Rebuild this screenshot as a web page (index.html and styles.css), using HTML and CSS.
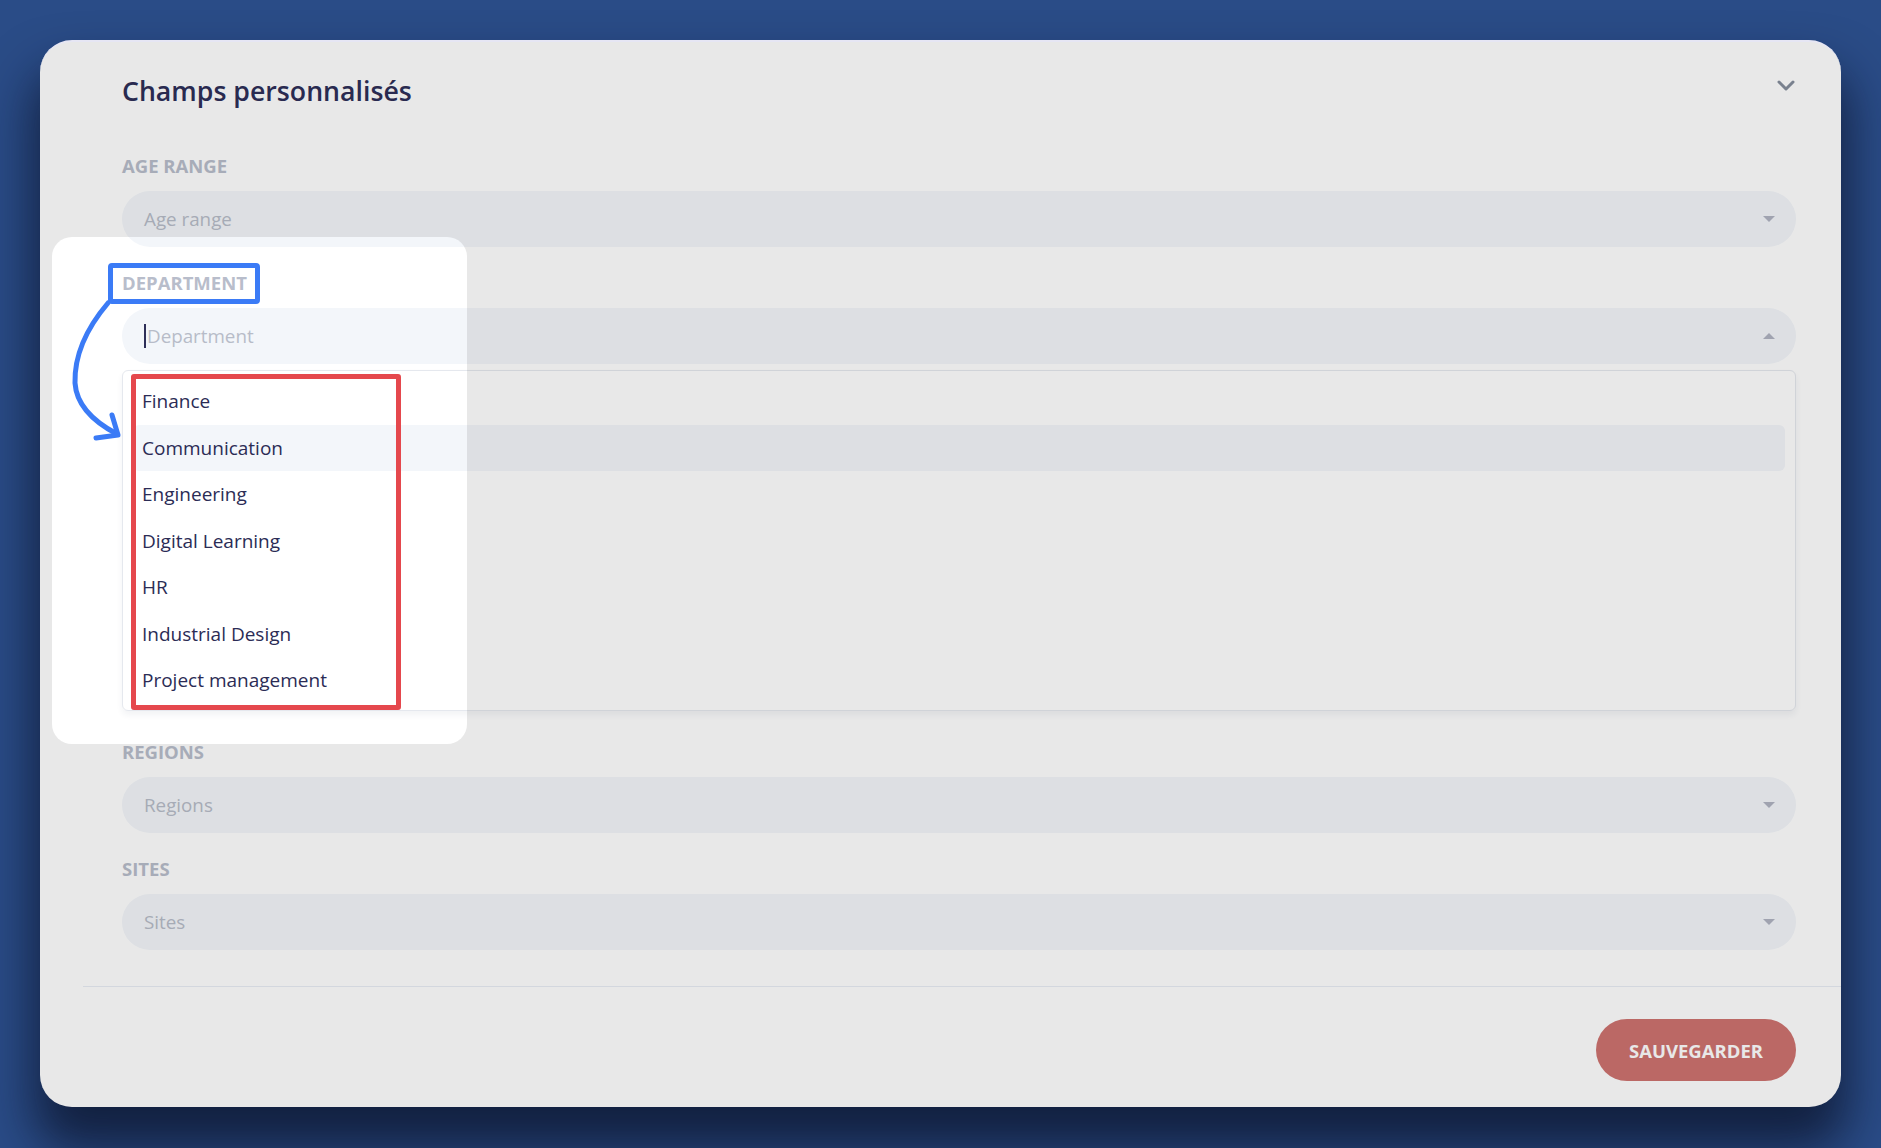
FILE: index.html
```html
<!DOCTYPE html>
<html lang="fr">
  <head>
    <meta charset="UTF-8" />
    <meta name="viewport" content="width=device-width, initial-scale=1.0" />
    <title>Champs personnalisés</title>
    <link rel="stylesheet" href="styles.css">
  </head>
  <body>
    <div class="card">
      <div class="card-head">
        <h2 class="card-title">Champs personnalisés</h2>
        <svg class="collapse-icon" width="18" height="11" viewBox="0 0 18 11">
          <polyline points="2,2 9,9 16,2" />
        </svg>
      </div>

      <div class="card-body">
        <div class="field">
          <label class="field-label">Age range</label>
          <div class="select">
            <span class="placeholder">Age range</span>
            <span class="caret"></span>
          </div>
        </div>

        <div class="field">
          <label class="field-label">Department</label>
          <div class="select">
            <span class="cursor"></span>
            <span class="placeholder">Department</span>
            <span class="caret caret-up"></span>
          </div>
          <ul class="options">
            <li>Finance</li>
            <li class="active">Communication</li>
            <li>Engineering</li>
            <li>Digital Learning</li>
            <li>HR</li>
            <li>Industrial Design</li>
            <li>Project management</li>
          </ul>
        </div>

        <div class="field">
          <label class="field-label">Regions</label>
          <div class="select">
            <span class="placeholder">Regions</span>
            <span class="caret"></span>
          </div>
        </div>

        <div class="field">
          <label class="field-label">Sites</label>
          <div class="select">
            <span class="placeholder">Sites</span>
            <span class="caret"></span>
          </div>
        </div>
      </div>

      <div class="card-foot">
        <button class="btn-save">Sauvegarder</button>
      </div>

      <!-- highlight layer -->
      <div class="spotlight"></div>
      <div class="mark mark-label"></div>
      <div class="mark mark-list"></div>
      <svg class="mark-arrow" width="110" height="190" viewBox="0 0 110 190">
        <path d="M48 8 Q14 48 15 88 Q17 118 57 139" />
        <path d="M36 143 L58 140 L52 120" />
      </svg>
    </div>
  </body>
</html>
```

FILE: styles.css
```css
* {
  box-sizing: border-box;
}
body {
  margin: 0;
  padding: 40px;
  min-height: 100vh;
  background: #2a4c87;
  font-family: "Open Sans", "Noto Sans", sans-serif;
}
.card {
  position: relative;
  overflow: hidden;
  background: #fff;
  border-top: 2px solid #e6e6f4;
  border-radius: 32px;
  box-shadow: 0 36px 50px 6px rgba(8, 14, 34, 0.7);
}
.card-head {
  display: flex;
  justify-content: space-between;
  align-items: flex-start;
  padding: 31px 46px 0 82px;
}
.card-title {
  margin: 0;
  font-size: 26.7px;
  line-height: 36px;
  font-weight: 600;
  color: #2e2f58;
}
.collapse-icon {
  margin-top: 7px;
}
.collapse-icon polyline {
  fill: none;
  stroke: #858e9d;
  stroke-width: 3;
  stroke-linecap: round;
  stroke-linejoin: round;
}
.card-body {
  display: flex;
  flex-direction: column;
  gap: 24px;
  padding: 45px 45px 36px 82px;
}
.field {
  display: flex;
  flex-direction: column;
}
.field-label {
  font-size: 18.5px;
  line-height: 24px;
  font-weight: 700;
  text-transform: uppercase;
  color: #b8bdcb;
  margin-bottom: 13px;
}
.select {
  display: flex;
  align-items: center;
  height: 56px;
  padding: 0 21px 0 22px;
  border-radius: 28px;
  background: #f3f6fa;
}
.placeholder {
  flex: 1;
  font-size: 18.8px;
  color: #b7bcc8;
}
.cursor {
  width: 2px;
  height: 24px;
  margin: 0 1px 0 0;
  background: #2e2f58;
}
.caret {
  width: 0;
  height: 0;
  border-left: 6px solid transparent;
  border-right: 6px solid transparent;
  border-top: 6px solid #b0b4c2;
}
.caret-up {
  border-top: 0;
  border-bottom: 6px solid #b0b4c2;
}
.options {
  list-style: none;
  margin: 6px 0 5.5px;
  padding: 7px 10px 6px;
  border: 1px solid #e5e8ee;
  border-radius: 6px;
  box-shadow: 0 4px 6px rgba(40, 50, 90, 0.06);
}
.options li {
  height: 46.5px;
  line-height: 46.5px;
  padding-left: 9px;
  border-radius: 6px;
  font-size: 19px;
  color: #2b2c55;
}
.options li.active {
  background: #f3f6fa;
}
.card-foot {
  display: flex;
  justify-content: flex-end;
  margin-left: 43px;
  padding: 32px 45px 26px 0;
  border-top: 1px solid #e8edf4;
}
.btn-save {
  height: 62px;
  padding: 0 33px;
  border: none;
  border-radius: 31px;
  background: #ce7370;
  color: #fff;
  font-family: inherit;
  font-size: 18.5px;
  font-weight: 700;
  text-transform: uppercase;
}
.spotlight {
  position: absolute;
  left: 12px;
  top: 195px;
  width: 415px;
  height: 507px;
  border-radius: 20px;
  box-shadow: 0 0 0 3000px rgba(0, 0, 0, 0.09);
}
.mark {
  position: absolute;
  border-style: solid;
  border-width: 5px;
}
.mark-label {
  left: 68px;
  top: 221px;
  width: 152px;
  height: 41px;
  border-color: #3b7bf6;
  border-radius: 4px;
}
.mark-list {
  left: 91px;
  top: 332px;
  width: 270px;
  height: 336px;
  border-color: #e5484d;
  border-radius: 3px;
}
.mark-arrow {
  position: absolute;
  left: 20px;
  top: 253px;
}
.mark-arrow path {
  fill: none;
  stroke: #3b7bf6;
  stroke-width: 5;
  stroke-linecap: round;
  stroke-linejoin: round;
}
```
